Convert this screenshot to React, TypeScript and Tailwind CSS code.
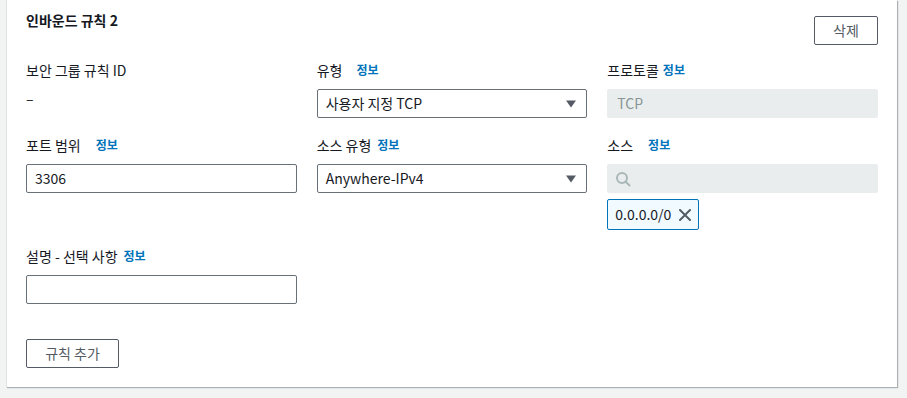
import React from "react";

const font = { fontFamily: '"Noto Sans CJK KR", "Noto Sans", sans-serif' };

function Label({ children, info = true, gap = "ml-2" }: { children: React.ReactNode; info?: boolean; gap?: string }) {
  return (
    <div className="flex items-center h-[20px] text-[14px] text-[#16191f]">
      <span>{children}</span>
      {info && <span className={`text-[12px] font-bold text-[#0073bb] ${gap}`}>정보</span>}
    </div>
  );
}

function Caret() {
  return (
    <svg width="12" height="8" viewBox="0 0 12 8" className="mr-[3px]">
      <path d="M1 0.5 L11 0.5 L6 7.5 Z" fill="#545b64" />
    </svg>
  );
}

export default function App() {
  return (
    <div style={font} className="w-[907px] h-[398px] bg-[#f2f3f3] overflow-hidden">
      <div className="ml-[6px] w-[891px] h-[387px] bg-white border-l border-[#e1e4e4] shadow-[1px_1px_1px_0_rgba(0,28,36,0.3)] px-[19px] pt-[8px]">
        <div className="flex justify-between items-start">
          <div className="text-[14px] font-bold text-[#16191f] pt-[2px]">인바운드 규칙 2</div>
          <button className="mt-[8px] w-[64px] h-[29px] border border-[#545b64] rounded-[2px] text-[14px] text-[#545b64] bg-white">삭제</button>
        </div>
        <div className="grid grid-cols-3 gap-x-[20px] mt-[15px]">
          <div>
            <Label info={false}>보안 그룹 규칙 ID</Label>
            <div className="h-[29px] mt-[9px] text-[14px] text-[#16191f] leading-[18px]">–</div>
          </div>
          <div>
            <Label gap="ml-[14px]">유형</Label>
            <div className="h-[29px] mt-[9px] border border-[#687078] rounded-[2px] flex items-center justify-between pl-[8px] pr-[6px] text-[14px] text-[#16191f]">
              <span>사용자 지정 TCP</span>
              <Caret />
            </div>
          </div>
          <div>
            <Label gap="ml-[4px]">프로토콜</Label>
            <div className="h-[29px] mt-[9px] bg-[#eaeded] rounded-[2px] flex items-center pl-[10px] text-[14px] text-[#879596]">TCP</div>
          </div>
        </div>

        <div className="grid grid-cols-3 gap-x-[20px] mt-[17px]">
          <div>
            <Label gap="ml-[15px]">포트 범위</Label>
            <div className="h-[29px] mt-[9px] border border-[#687078] rounded-[2px] flex items-center pl-[8px] text-[14px] text-[#16191f]">3306</div>
          </div>
          <div>
            <Label gap="ml-[6px]">소스 유형</Label>
            <div className="h-[29px] mt-[9px] border border-[#687078] rounded-[2px] flex items-center justify-between pl-[8px] pr-[6px] text-[14px] text-[#16191f]">
              <span>Anywhere-IPv4</span>
              <Caret />
            </div>
          </div>
          <div>
            <Label gap="ml-[15px]">소스</Label>
            <div className="h-[29px] mt-[9px] bg-[#eaeded] rounded-[2px] flex items-center pl-[8px]">
              <svg width="16" height="16" viewBox="0 0 16 16" fill="none" stroke="#aab7b8" strokeWidth="2">
                <circle cx="7" cy="7" r="5" />
                <path d="M10.5 10.5 L14.5 14.5" strokeLinecap="round" />
              </svg>
            </div>
            <div className="mt-[6px] inline-flex items-center h-[31px] border border-[#0073bb] bg-[#f1faff] rounded-[2px] pl-[7px] pr-[7px] text-[14px] text-[#16191f]">
              <span>0.0.0.0/0</span>
              <svg width="12" height="12" viewBox="0 0 12 12" className="ml-[8px]" stroke="#545b64" strokeWidth="2" strokeLinecap="round">
                <path d="M1 1 L11 11 M11 1 L1 11" />
              </svg>
            </div>
          </div>
        </div>

        <div className="grid grid-cols-3 gap-x-[20px] mt-[16px]">
          <div>
            <Label gap="ml-[6px]">설명 - 선택 사항</Label>
            <div className="h-[29px] mt-[9px] border border-[#687078] rounded-[2px]"></div>
          </div>
        </div>

        <button className="mt-[35px] w-[93px] h-[29px] border border-[#545b64] rounded-[2px] text-[14px] text-[#545b64] bg-white">규칙 추가</button>
      </div>
    </div>
  );
}
